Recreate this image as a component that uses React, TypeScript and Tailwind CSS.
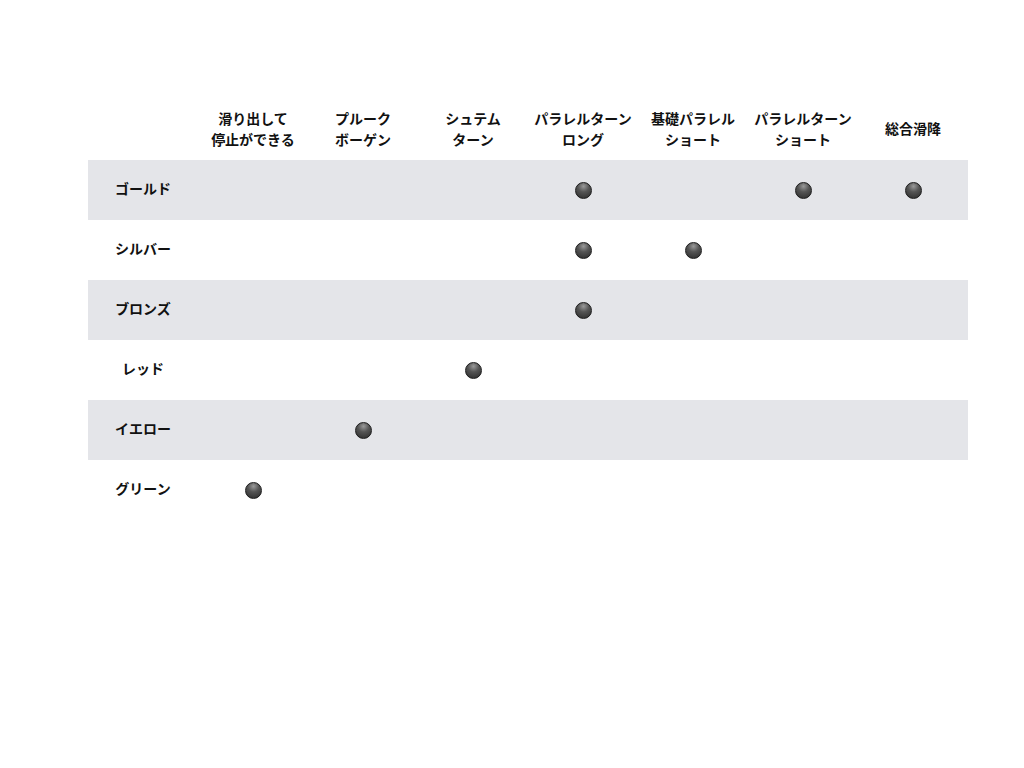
const columns: string[][] = [
  ["滑り出して", "停止ができる"],
  ["プルーク", "ボーゲン"],
  ["シュテム", "ターン"],
  ["パラレルターン", "ロング"],
  ["基礎パラレル", "ショート"],
  ["パラレルターン", "ショート"],
  ["総合滑降"],
];

const rows: { name: string; marks: number[] }[] = [
  { name: "ゴールド", marks: [3, 5, 6] },
  { name: "シルバー", marks: [3, 4] },
  { name: "ブロンズ", marks: [3] },
  { name: "レッド", marks: [2] },
  { name: "イエロー", marks: [1] },
  { name: "グリーン", marks: [0] },
];

function Dot() {
  return (
    <span className="block w-[17px] h-[17px] rounded-full border border-[#1c1c1c] bg-[radial-gradient(circle_at_50%_22%,#9a9a9a_0%,#555_40%,#2a2a2a_100%)]" />
  );
}

export default function App() {
  return (
    <div
      className="min-h-[768px] bg-white pl-[88px] pt-[100px] text-[#111] font-bold text-[14px]"
      style={{ fontFamily: '"Noto Sans CJK JP", "Noto Sans", sans-serif' }}
    >
      <div className="w-[880px]">
        <div className="grid grid-cols-8 h-[60px]">
          <div />
          {columns.map((lines, i) => (
            <div key={i} className="flex flex-col items-center justify-center pb-[3px] leading-[21px] text-center">
              {lines.map((l) => (
                <span key={l}>{l}</span>
              ))}
            </div>
          ))}
        </div>
        {rows.map((row, r) => (
          <div
            key={row.name}
            className={`grid grid-cols-8 h-[60px] ${r % 2 === 0 ? "bg-[#e4e5e9]" : "bg-white"}`}
          >
            <div className="flex items-center justify-center pb-[3px]">{row.name}</div>
            {columns.map((_, c) => (
              <div key={c} className="flex items-center justify-center pt-px">
                {row.marks.includes(c) ? <Dot /> : null}
              </div>
            ))}
          </div>
        ))}
      </div>
    </div>
  );
}
